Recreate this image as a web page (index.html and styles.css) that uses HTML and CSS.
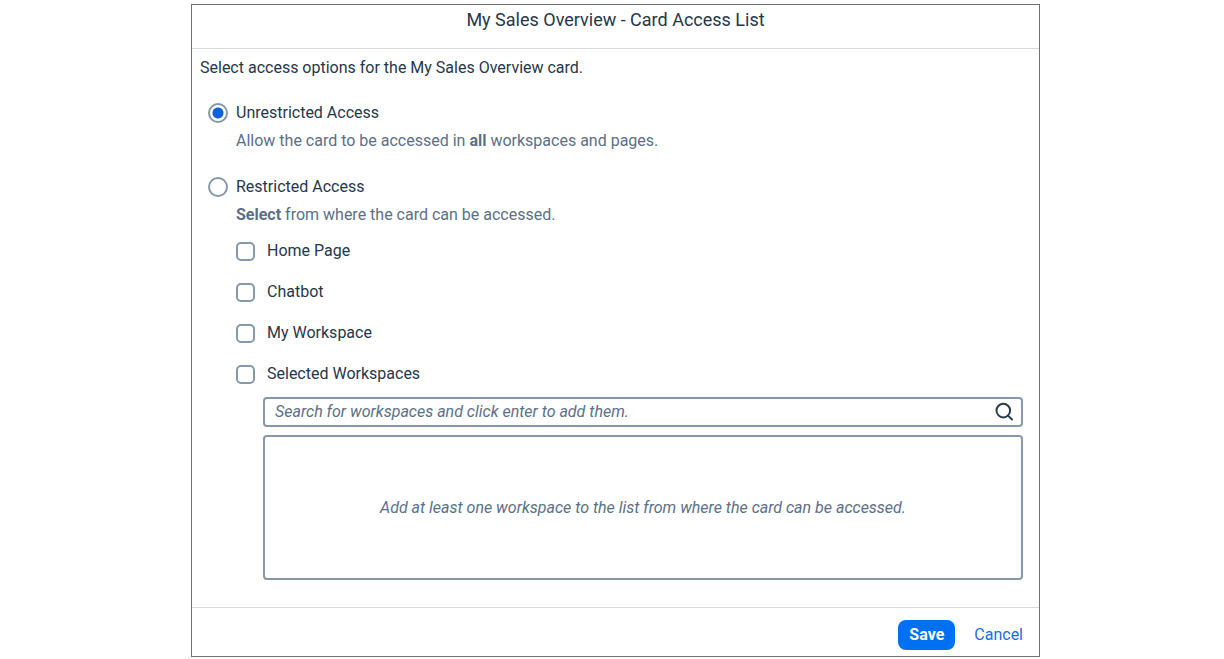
FILE: index.html
```html
<!DOCTYPE html>
<html lang="en">
<head>
<meta charset="utf-8">
<title>My Sales Overview - Card Access List</title>
<link rel="stylesheet" href="styles.css">
</head>
<body>
<form class="dialog">
  <header class="dialog-header"><h1>My Sales Overview - Card Access List</h1></header>
  <main class="dialog-body">
    <p class="intro">Select access options for the My Sales Overview card.</p>
    <div class="option">
      <input class="radio" type="radio" name="access" id="unrestricted" checked>
      <div class="option-content">
        <label for="unrestricted">Unrestricted Access</label>
        <p class="hint">Allow the card to be accessed in <b>all</b> workspaces and pages.</p>
      </div>
    </div>
    <div class="option">
      <input class="radio" type="radio" name="access" id="restricted">
      <div class="option-content">
        <label for="restricted">Restricted Access</label>
        <p class="hint"><b>Select</b> from where the card can be accessed.</p>
        <div class="checks">
          <div class="check-row"><input class="check" type="checkbox" id="home"><label for="home">Home Page</label></div>
          <div class="check-row"><input class="check" type="checkbox" id="chatbot"><label for="chatbot">Chatbot</label></div>
          <div class="check-row"><input class="check" type="checkbox" id="mine"><label for="mine">My Workspace</label></div>
          <div class="check-row"><input class="check" type="checkbox" id="selected"><label for="selected">Selected Workspaces</label></div>
        </div>
        <div class="workspaces">
          <div class="search">
            <input type="text" aria-label="Search workspaces" placeholder="Search for workspaces and click enter to add them.">
            <button type="button" class="search-button" aria-label="Search">
              <svg viewBox="0 0 20 20" width="20" height="20"><circle cx="9.3" cy="8.6" r="6.8"/><path d="M14 13.6l4 3.9"/></svg>
            </button>
          </div>
          <div class="empty-list">Add at least one workspace to the list from where the card can be accessed.</div>
        </div>
      </div>
    </div>
  </main>
  <footer class="dialog-footer">
    <button type="button" class="save">Save</button>
    <button type="button" class="cancel">Cancel</button>
  </footer>
</form>
</body>
</html>
```
FILE: styles.css
```css
* { box-sizing: border-box; }
body {
  margin: 0;
  padding: 4px 184px 2px 191px;
  background: #fff;
  color: #26374a;
  font: 16px/20px Roboto, "Noto Sans", sans-serif;
}
h1, p { margin: 0; font-size: 16px; font-weight: 400; }
.dialog { border: 1px solid #707070; }
.dialog-header {
  padding: 4px 0 18px;
  border-bottom: 1px solid #d9d9d9;
  text-align: center;
}
.dialog-header h1 { font-size: 18px; line-height: 21px; }
.dialog-body { padding: 9px 16px 27px 8px; }
.intro { margin-bottom: 25px; }
.option { display: flex; gap: 8px; margin: 0 0 26px 8px; }
.option:last-child { margin-bottom: 0; }
.option-content { flex: 1; }
.option-content > label { display: block; }
.hint { margin-top: 8px; color: #5b7088; }
.radio, .check { appearance: none; flex: none; margin: 0; border: 2px solid #8798aa; background: #fff; }
.radio { width: 20px; height: 20px; border-radius: 50%; }
.radio:checked { background: radial-gradient(circle, #0f62dc 5px, #fff 6px); }
.checks { display: flex; flex-direction: column; gap: 21px; margin-top: 16px; }
.check-row { display: flex; align-items: center; gap: 12px; }
.check { width: 19px; height: 19px; border-radius: 5px; }
.workspaces { margin: 13px 0 0 27px; }
.search {
  display: flex;
  align-items: center;
  height: 30px;
  padding: 0 7px 0 10px;
  border: 2px solid #8798aa;
  border-radius: 4px;
}
.search input { flex: 1; min-width: 0; padding: 0; border: 0; outline: 0; background: none; color: #26374a; font: inherit; font-style: italic; }
.search input::placeholder { color: #5b7088; opacity: 1; }
.search-button { display: flex; padding: 0; border: 0; background: none; }
.search svg { fill: none; stroke: #2c3c4e; stroke-width: 2; stroke-linecap: round; }
.empty-list {
  display: flex;
  align-items: center;
  justify-content: center;
  min-height: 145px;
  margin-top: 8px;
  border: 2px solid #8798aa;
  border-radius: 4px;
  color: #5b7088;
  font-style: italic;
}
.dialog-footer {
  display: flex;
  justify-content: flex-end;
  gap: 9px;
  padding: 12px 6px 6px;
  border-top: 1px solid #d9d9d9;
}
.save, .cancel { height: 30px; padding: 0 10px; border: 0; border-radius: 8px; font: inherit; }
.save { min-width: 57px; background: #0070f2; color: #fff; font-weight: 700; }
.cancel { background: none; color: #1a6ddb; }
```
